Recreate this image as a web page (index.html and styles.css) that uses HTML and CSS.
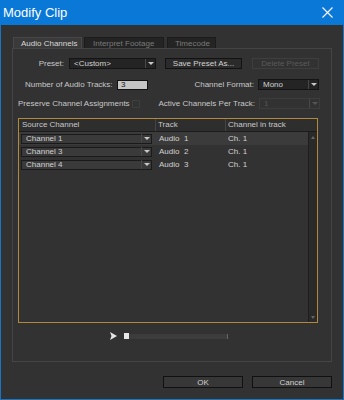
FILE: index.html
```html
<!DOCTYPE html>
<html lang="en">
<head>
    <meta charset="UTF-8">
    <title>Modify Clip</title>
    <link rel="stylesheet" href="styles.css">
</head>
<body>
    <div class="window">
        <div class="titlebar">
            <span class="title">Modify Clip</span>
            <svg class="close" width="11" height="11" viewBox="0 0 11 11">
                <path d="M0.5 0.5 L10.5 10.5 M10.5 0.5 L0.5 10.5" stroke="#fff" stroke-width="1.1"/>
            </svg>
        </div>

        <div class="body">
            <div class="tabs">
                <div class="tab active tab-audio">Audio Channels</div>
                <div class="tab tab-interp">Interpret Footage</div>
                <div class="tab tab-tc">Timecode</div>
            </div>

            <div class="panel">
                <div class="row row-preset">
                    <label class="lbl preset-lbl">Preset:</label>
                    <div class="select preset-select"><span>&lt;Custom&gt;</span><i class="arrow"></i></div>
                    <button class="btn save-btn">Save Preset As...</button>
                    <button class="btn disabled delete-btn">Delete Preset</button>
                </div>

                <div class="row row-tracks">
                    <label class="lbl tracks-lbl">Number of Audio Tracks:</label>
                    <div class="num-input">3</div>
                    <label class="lbl format-lbl">Channel Format:</label>
                    <div class="select small-select"><span>Mono</span><i class="arrow"></i></div>
                </div>

                <div class="row row-preserve">
                    <label class="lbl preserve-lbl">Preserve Channel Assignments</label>
                    <div class="checkbox"></div>
                    <label class="lbl active-lbl">Active Channels Per Track:</label>
                    <div class="select small-select disabled"><span>1</span><i class="arrow"></i></div>
                </div>

                <div class="table">
                    <div class="thead">
                        <div class="col-src">Source Channel</div>
                        <div class="col-track">Track</div>
                        <div class="col-ch">Channel in track</div>
                    </div>
                    <div class="tbody">
                        <div class="rows">
                            <div class="trow selected">
                                <div class="col-src"><div class="select cell-select"><span>Channel 1</span><i class="arrow"></i></div></div>
                                <div class="col-track">Audio&nbsp; 1</div>
                                <div class="col-ch">Ch. 1</div>
                            </div>
                            <div class="trow">
                                <div class="col-src"><div class="select cell-select"><span>Channel 3</span><i class="arrow"></i></div></div>
                                <div class="col-track">Audio&nbsp; 2</div>
                                <div class="col-ch">Ch. 1</div>
                            </div>
                            <div class="trow">
                                <div class="col-src"><div class="select cell-select"><span>Channel 4</span><i class="arrow"></i></div></div>
                                <div class="col-track">Audio&nbsp; 3</div>
                                <div class="col-ch">Ch. 1</div>
                            </div>
                        </div>
                        <div class="scrollbar">
                            <i class="sb-up"></i>
                            <i class="sb-down"></i>
                        </div>
                    </div>
                </div>

                <div class="player">
                    <svg width="7" height="8" viewBox="0 0 7 8"><path d="M0 0 L7 4 L0 8 L1.5 4 Z" fill="#e6e6e6"/></svg>
                    <div class="slider"><span class="knob"></span></div>
                </div>
            </div>

            <div class="footer">
                <button class="btn footer-btn">OK</button>
                <button class="btn footer-btn">Cancel</button>
            </div>
        </div>
    </div>
</body>
</html>
```

FILE: styles.css
```css
body {
    margin: 0;
    background: #323232;
    font-family: "Liberation Sans", Arial, sans-serif;
    font-size: 8px;
    color: #c8c8c8;
}
.window {
    width: 344px;
    height: 400px;
    box-sizing: border-box;
    border: 1px solid #1a74c4;
    border-top: none;
    display: flex;
    flex-direction: column;
}
.titlebar {
    height: 25px;
    background: #0a78d7;
    display: flex;
    align-items: center;
    justify-content: space-between;
    padding: 0 11px 0 3px;
    margin: 0 -1px;
}
.title {
    color: #fff;
    font-size: 13px;
}
.body {
    flex: 1;
    background: #323232;
    padding: 12px 11px 0 11px;
    display: flex;
    flex-direction: column;
}
.tabs {
    display: flex;
    height: 11px;
    margin-left: 1px;
}
.tab {
    box-sizing: border-box;
    padding-left: 7px;
    line-height: 11px;
    background: #242424;
    color: #7a7a7a;
    border: 1px solid #1c1c1c;
    border-bottom: none;
    white-space: nowrap;
}
.tab.active {
    background: #3a3a3a;
    color: #d8d8d8;
    border-color: #474747;
}
.tab-audio {
    width: 69px;
}
.tab-interp {
    width: 80px;
    margin-left: 2px;
    padding-left: 8px;
}
.tab-tc {
    width: 49px;
    margin-left: 3px;
}
.panel {
    height: 314px;
    box-sizing: border-box;
    border: 1px solid #444;
    background: #323232;
    padding: 9px 5px 0 5px;
    display: flex;
    flex-direction: column;
}
.row {
    display: flex;
    align-items: center;
    height: 11px;
    white-space: nowrap;
}
.row > * {
    flex-shrink: 0;
}
.row-preset {
    margin-bottom: 10px;
}
.row-tracks {
    margin-bottom: 8px;
}
.row-preserve {
    margin-bottom: 9px;
}
.preset-lbl {
    width: 46px;
    text-align: right;
    margin-right: 5px;
}
.select {
    height: 11px;
    box-sizing: border-box;
    background: #242424;
    border: 1px solid #141414;
    display: flex;
    align-items: center;
    color: #d2d2d2;
}
.select span {
    flex: 1;
    padding-left: 4px;
}
.arrow {
    width: 9px;
    height: 9px;
    border-left: 1px solid #484848;
    position: relative;
}
.arrow::after {
    content: "";
    position: absolute;
    left: 2px;
    top: 3px;
    border-left: 3px solid transparent;
    border-right: 3px solid transparent;
    border-top: 3px solid #c8c8c8;
}
.preset-select {
    width: 87px;
}
.btn {
    height: 11px;
    box-sizing: border-box;
    background: #2b2b2b;
    border: 1px solid #121212;
    color: #d2d2d2;
    font-family: "Liberation Sans", Arial, sans-serif;
    font-size: 8px;
    padding: 0;
    line-height: 9px;
}
.save-btn {
    width: 77px;
    margin-left: 9px;
}
.btn.disabled {
    background: #323232;
    border-color: #3e3e3e;
    color: #5a5a5a;
}
.delete-btn {
    width: 67px;
    margin-left: 10px;
}
.tracks-lbl {
    width: 92px;
    margin-left: 7px;
}
.num-input {
    width: 31px;
    height: 10px;
    box-sizing: border-box;
    background: #c4c4c4;
    border: 1px solid #111;
    color: #111;
    padding-left: 3px;
    line-height: 8px;
}
.format-lbl {
    width: 106px;
    text-align: right;
    margin-right: 4px;
}
.small-select {
    width: 61px;
}
.select.disabled {
    background: #323232;
    border-color: #3c3c3c;
    color: #555;
}
.select.disabled .arrow::after {
    border-top-color: #555;
}
.preserve-lbl {
    width: 114px;
}
.checkbox {
    width: 8px;
    height: 8px;
    border: 1px solid #3e3e3e;
    box-sizing: border-box;
}
.active-lbl {
    width: 115px;
    text-align: right;
    margin-right: 4px;
}
.table {
    margin: 0 8px 0 0;
    height: 205px;
    box-sizing: border-box;
    border: 1px solid #b08a3a;
    display: flex;
    flex-direction: column;
}
.thead {
    display: flex;
    height: 12px;
    line-height: 12px;
    background: #2e2e2e;
    border-bottom: 1px solid #1c1c1c;
}
.col-src {
    width: 136px;
    padding-left: 3px;
    box-sizing: border-box;
}
.col-track {
    width: 70px;
    padding-left: 2px;
    box-sizing: border-box;
    border-left: 1px solid #454545;
}
.col-ch {
    flex: 1;
    padding-left: 2px;
    border-left: 1px solid #454545;
}
.tbody {
    flex: 1;
    display: flex;
}
.rows {
    flex: 1;
}
.trow {
    display: flex;
    height: 13px;
    line-height: 13px;
    align-items: center;
    color: #d2d2d2;
}
.trow .col-track {
    border-left: 1px solid transparent;
    padding-left: 3px;
}
.trow .col-ch {
    border-left: 1px solid transparent;
}
.trow.selected {
    background: #3b3b3b;
}
.trow .col-src {
    padding-left: 2px;
}
.cell-select {
    width: 131px;
    height: 10px;
    background: #3a3a3a;
    border-color: #1a1a1a;
}
.scrollbar {
    width: 8px;
    background: #2a2a2a;
    border-left: 1px solid #1e1e1e;
    position: relative;
}
.sb-up, .sb-down {
    position: absolute;
    left: 2px;
    border-left: 2px solid transparent;
    border-right: 2px solid transparent;
}
.sb-up {
    top: 4px;
    border-bottom: 3px solid #666;
}
.sb-down {
    bottom: 3px;
    border-top: 3px solid #666;
}
.player {
    display: flex;
    align-items: center;
    margin: 9px 0 0 92px;
    gap: 7px;
}
.slider {
    width: 103px;
    height: 5px;
    background: #3c3c3c;
    border-right: 1px solid #666;
    position: relative;
}
.knob {
    position: absolute;
    left: 0;
    top: -1px;
    width: 5px;
    height: 6px;
    background: #e8e8e8;
}
.footer {
    display: flex;
    justify-content: flex-end;
    gap: 9px;
    margin-top: 14px;
}
.footer-btn {
    width: 80px;
    height: 12px;
    background: #373737;
    border: 1px solid #111;
}
```
